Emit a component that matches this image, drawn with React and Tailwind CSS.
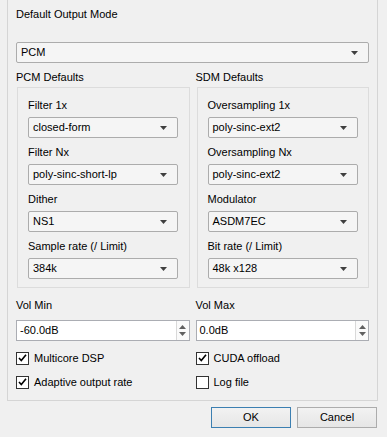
const font = { fontFamily: '"Liberation Sans", Arial, sans-serif' };

function Arrow() {
  return (
    <svg width="7" height="4" viewBox="0 0 7 4" className="shrink-0">
      <path d="M0 0H7L3.5 4Z" fill="#404040" />
    </svg>
  );
}

function Combo({ value, className = '' }) {
  return (
    <div
      className={`flex h-[21px] items-center justify-between rounded-[2px] border border-[#acacac] bg-[#f5f5f5] pl-[4px] pr-[10px] ${className}`}
    >
      <span className="leading-none">{value}</span>
      <Arrow />
    </div>
  );
}

function Field({ label, value, first }) {
  return (
    <div className={first ? '' : 'mt-[7px]'}>
      <div className="h-[14px] leading-[14px]">{label}</div>
      <Combo value={value} className="mt-[5px] w-[150px]" />
    </div>
  );
}

function Spin({ value }) {
  return (
    <div className="flex h-[21px] items-stretch border border-[#abadb3] bg-white">
      <div className="flex flex-1 items-center pl-[3px]">{value}</div>
      <div className="flex w-[13px] flex-col items-center justify-center gap-[3px] border-l border-[#d9d9d9] bg-[#fafafa]">
        <svg width="7" height="4" viewBox="0 0 7 4">
          <path d="M0 4H7L3.5 0Z" fill="#606060" />
        </svg>
        <svg width="7" height="4" viewBox="0 0 7 4">
          <path d="M0 0H7L3.5 4Z" fill="#606060" />
        </svg>
      </div>
    </div>
  );
}

function Check({ label, checked }) {
  return (
    <div className="flex h-[14px] items-center gap-[5px]">
      <div className="flex h-[13px] w-[13px] items-center justify-center border border-[#333333] bg-white">
        {checked && (
          <svg width="9" height="8" viewBox="0 0 9 8">
            <path d="M1 4L3.3 6.5L8 0.8" fill="none" stroke="#000" strokeWidth="1.6" />
          </svg>
        )}
      </div>
      <span>{label}</span>
    </div>
  );
}

function Group({ title, fields }) {
  return (
    <div>
      <div className="h-[14px] leading-[14px]">{title}</div>
      <div className="ml-px mt-[3px] border border-[#dcdcdc] pb-[8px] pl-[10px] pt-[10px]">
        {fields.map((f, i) => (
          <Field key={f[0]} label={f[0]} value={f[1]} first={i === 0} />
        ))}
      </div>
    </div>
  );
}

export default function App() {
  return (
    <div className="h-[437px] w-[387px] bg-[#f0f0f0] text-[11px] text-black" style={font}>
      <div className="ml-[7px] h-[401px] w-[371px] border-x border-b border-[#d5d5d5] px-[8px] pt-[7px]">
        <div className="h-[14px] leading-[14px]">Default Output Mode</div>
        <Combo value="PCM" className="mt-[21px]" />

        <div className="mt-[7px] grid grid-cols-2 gap-x-[6px]">
          <Group
            title="PCM Defaults"
            fields={[
              ['Filter 1x', 'closed-form'],
              ['Filter Nx', 'poly-sinc-short-lp'],
              ['Dither', 'NS1'],
              ['Sample rate (/ Limit)', '384k'],
            ]}
          />
          <Group
            title="SDM Defaults"
            fields={[
              ['Oversampling 1x', 'poly-sinc-ext2'],
              ['Oversampling Nx', 'poly-sinc-ext2'],
              ['Modulator', 'ASDM7EC'],
              ['Bit rate (/ Limit)', '48k x128'],
            ]}
          />
        </div>

        <div className="mt-[10px] grid grid-cols-2 gap-x-[6px]">
          <div>
            <div className="h-[14px] leading-[14px]">Vol Min</div>
            <div className="mt-[8px]">
              <Spin value="-60.0dB" />
            </div>
            <div className="mt-[10px] flex flex-col gap-[10px]">
              <Check label="Multicore DSP" checked />
              <Check label="Adaptive output rate" checked />
            </div>
          </div>
          <div>
            <div className="h-[14px] leading-[14px]">Vol Max</div>
            <div className="mt-[8px]">
              <Spin value="0.0dB" />
            </div>
            <div className="mt-[10px] flex flex-col gap-[10px]">
              <Check label="CUDA offload" checked />
              <Check label="Log file" />
            </div>
          </div>
        </div>
      </div>

      <div className="mr-[10px] mt-[6px] flex justify-end gap-[6px]">
        <button className="h-[21px] w-[80px] border border-[#3c7fb1] bg-gradient-to-b from-[#f2f2f2] to-[#e6e6e6]">
          OK
        </button>
        <button className="h-[21px] w-[80px] border border-[#acacac] bg-gradient-to-b from-[#f2f2f2] to-[#e6e6e6]">
          Cancel
        </button>
      </div>
    </div>
  );
}
